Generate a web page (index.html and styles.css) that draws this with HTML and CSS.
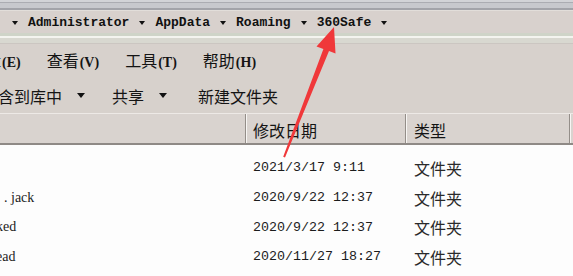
FILE: index.html
```html
<!DOCTYPE html>
<html lang="zh-CN">
<head>
<meta charset="utf-8">
<title>360Safe</title>
<link rel="stylesheet" href="styles.css">
</head>
<body>
<div class="screen">
  <div class="titlestrip"></div>
  <div class="address">
    <span class="tri"></span><span class="crumb">Administrator</span>
    <span class="tri"></span><span class="crumb">AppData</span>
    <span class="tri"></span><span class="crumb">Roaming</span>
    <span class="tri"></span><span class="crumb">360Safe</span>
    <span class="tri"></span>
  </div>
  <div class="sep"></div>
  <div class="menubar">
    <span class="menu first">编辑<small>(E)</small></span>
    <span class="menu">查看<small>(V)</small></span>
    <span class="menu">工具<small>(T)</small></span>
    <span class="menu">帮助<small>(H)</small></span>
  </div>
  <div class="toolbar">
    <span class="tool first">包含到库中</span><span class="drop"></span>
    <span class="tool share">共享</span><span class="drop"></span>
    <span class="tool newfolder">新建文件夹</span>
  </div>
  <div class="header">
    <div class="hcol name"></div>
    <div class="hcol date">修改日期</div>
    <div class="hcol type">类型</div>
    <div class="hcol rest"></div>
  </div>
  <div class="list">
    <div class="row"><span class="name"></span><span class="date">2021/3/17 9:11</span><span class="type">文件夹</span></div>
    <div class="row"><span class="name">. jack</span><span class="date">2020/9/22 12:37</span><span class="type">文件夹</span></div>
    <div class="row"><span class="name cut">ked</span><span class="date">2020/9/22 12:37</span><span class="type">文件夹</span></div>
    <div class="row"><span class="name cut2">ead</span><span class="date">2020/11/27 18:27</span><span class="type">文件夹</span></div>
  </div>
  <svg class="arrow" width="573" height="276" viewBox="0 0 573 276" aria-hidden="true">
    <polygon points="334,27 335.5,53.6 329,51.1 285,157.4 283.2,156.8 323.4,48.9 316.5,46.4" fill="#f0383a"/>
  </svg>
</div>
</body>
</html>
```

FILE: styles.css
```css
* { box-sizing: border-box; margin: 0; padding: 0; }
html, body { width: 573px; height: 276px; overflow: hidden; background: #d7d1cc; }
body { font-family: "Noto Sans CJK SC", sans-serif; color: #141414; }

.screen {
  position: relative;
  width: 573px;
  height: 276px;
  overflow: hidden;
  display: flex;
  flex-direction: column;
}

.titlestrip {
  flex: none;
  height: 11px;
  background: linear-gradient(#d2d3d7 0 2px, #abacb2 2px 3px, #c7c8cd 3px 8px, #a2a3a9 8px 10px, #e2deda 10px 11px);
}

.address {
  flex: none;
  height: 22px;
  display: flex;
  align-items: center;
  gap: 10px;
  padding-left: 12px;
  background: #d8d1cd;
  font: bold 13px/1 "Liberation Mono", monospace;
  color: #111;
}

.tri {
  width: 0;
  height: 0;
  border-left: 3px solid transparent;
  border-right: 3px solid transparent;
  border-top: 4px solid #111;
  margin-top: 1px;
}

.sep {
  flex: none;
  height: 10px;
  background: linear-gradient(#cfd4c8 0 3px, #f4f4ef 3px 5px, #d8d8d0 5px 10px);
}

.menubar {
  flex: none;
  height: 35px;
  display: flex;
  align-items: center;
  gap: 26px;
  font-size: 16px;
  line-height: 1;
  border-top: 1px solid #cbc6c1;
}
.menu small {
  font-size: 14px;
  font-family: "Liberation Serif", serif;
  font-weight: bold;
  margin-left: 1px;
}
.menu.first { margin-left: -31px; }

.toolbar {
  flex: none;
  height: 35px;
  display: flex;
  align-items: center;
  font-size: 16px;
  line-height: 1;
}
.tool.first { margin-left: -18px; }
.drop {
  width: 0;
  height: 0;
  border-left: 4px solid transparent;
  border-right: 4px solid transparent;
  border-top: 5px solid #111;
  margin-left: 15px;
}
.tool.share { margin-left: 27px; }
.tool.newfolder { margin-left: 31px; }

.header {
  flex: none;
  height: 32px;
  display: grid;
  grid-template-columns: 246px 160px 164px 3px;
  background: #d9d3cf;
  border-top: 1px solid #ede9e6;
  border-bottom: 2px solid #8f8a86;
  font-size: 16px;
  line-height: 1;
}
.hcol {
  display: flex;
  align-items: center;
  padding-top: 3px;
  border-right: 1px solid #948e89;
  border-left: 1px solid #f7f5f3;
}
.hcol.name { border-left: none; }
.hcol.date { padding-left: 6px; }
.hcol.type { padding-left: 7px; }
.hcol.rest { border-right: none; }

.list {
  flex: 1;
  background: #fdfdfd;
  padding-top: 8px;
}
.row {
  display: grid;
  grid-template-columns: 246px 160px 167px;
  height: 29.7px;
  align-items: center;
}
.row .name {
  font: 14px "Liberation Serif", serif;
  color: #222;
  padding-left: 4px;
  white-space: pre;
  overflow: hidden;
}
.row .name.cut { text-indent: -8px; padding-left: 4px; }
.row .name.cut2 { text-indent: -7px; padding-left: 3px; }
.row .date {
  padding-left: 7px;
  font: 13.33px "Liberation Mono", monospace;
  color: #1c1c1c;
}
.row .type {
  padding-left: 8px;
  font-size: 16px;
  color: #2a2a2a;
}

.arrow {
  position: absolute;
  left: 0;
  top: 0;
  pointer-events: none;
}
```
